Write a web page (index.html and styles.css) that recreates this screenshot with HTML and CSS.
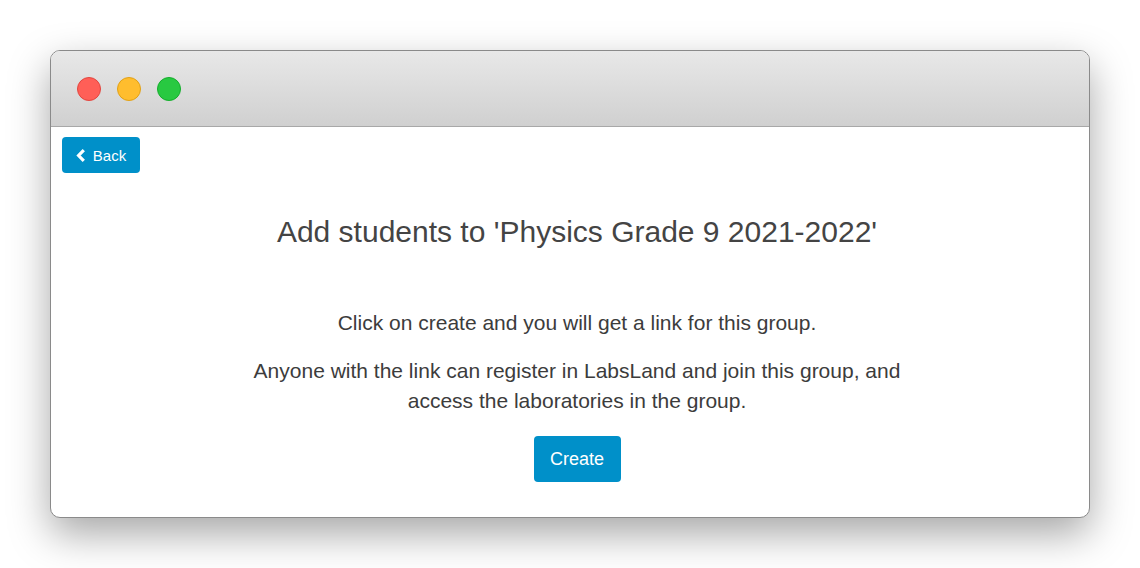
FILE: index.html
```html
<!DOCTYPE html>
<html>
<head>
<meta charset="utf-8">
<link rel="stylesheet" href="styles.css">
</head>
<body>
<div class="window">
  <div class="titlebar">
    <span class="dot red"></span>
    <span class="dot yellow"></span>
    <span class="dot green"></span>
  </div>
  <div class="content">
    <div class="toolbar">
      <a class="btn btn-back" href="#">
        <svg class="chev" width="10" height="13" viewBox="0 0 10 13"><path d="M7.8 1.2 L2.6 6.5 L7.8 11.8" fill="none" stroke="#fff" stroke-width="3.2" stroke-linejoin="miter"/></svg>
        Back
      </a>
    </div>
    <div class="main">
      <h1 class="title">Add students to 'Physics Grade 9 2021-2022'</h1>
      <p class="lead">Click on create and you will get a link for this group.</p>
      <p class="info">Anyone with the link can register in LabsLand and join this group, and<br>access the laboratories in the group.</p>
      <a class="btn btn-create" href="#">Create</a>
    </div>
  </div>
</div>
</body>
</html>
```

FILE: styles.css
```css
html, body {
  margin: 0;
  padding: 0;
  background: #ffffff;
  font-family: "Liberation Sans", Arial, sans-serif;
}
body {
  padding: 50px;
  width: 1040px;
}
.window {
  width: 1038px;
  height: 466px;
  border: 1px solid #8a8a8a;
  border-radius: 10px;
  background: #fff;
  overflow: hidden;
  box-shadow: 0 16px 40px rgba(0,0,0,0.35);
}
.titlebar {
  height: 75px;
  background: linear-gradient(#e8e8e8, #d0d0d0);
  border-bottom: 1px solid #a8a8a8;
  display: flex;
  align-items: center;
  gap: 16px;
  padding-left: 26px;
}
.dot {
  width: 22px;
  height: 22px;
  border-radius: 50%;
  display: inline-block;
}
.red { background: #ff5f57; border: 1px solid #e2463f; }
.yellow { background: #ffbd2e; border: 1px solid #e1a116; }
.green { background: #28c941; border: 1px solid #14ae2c; }
.content {
  padding: 10px 11px;
}
.btn {
  display: inline-flex;
  align-items: center;
  justify-content: center;
  background: #0090c9;
  color: #fff;
  text-decoration: none;
  border-radius: 4px;
}
.btn-back {
  width: 78px;
  height: 36px;
  font-size: 15px;
  gap: 7px;
  box-sizing: border-box;
  padding-left: 0;
}
.main {
  display: flex;
  flex-direction: column;
  align-items: center;
  padding-left: 14px;
  color: #3c3c3c;
}
.title {
  font-weight: normal;
  font-size: 30px;
  margin: 40px 0 0 0;
  line-height: 38px;
  color: #444;
}
.lead {
  font-size: 21px;
  line-height: 30px;
  margin: 57px 0 0 0;
}
.info {
  font-size: 21px;
  line-height: 30px;
  text-align: center;
  margin: 18px 0 0 0;
}
.btn-create {
  width: 87px;
  height: 46px;
  font-size: 18px;
  margin-top: 20px;
}
```
